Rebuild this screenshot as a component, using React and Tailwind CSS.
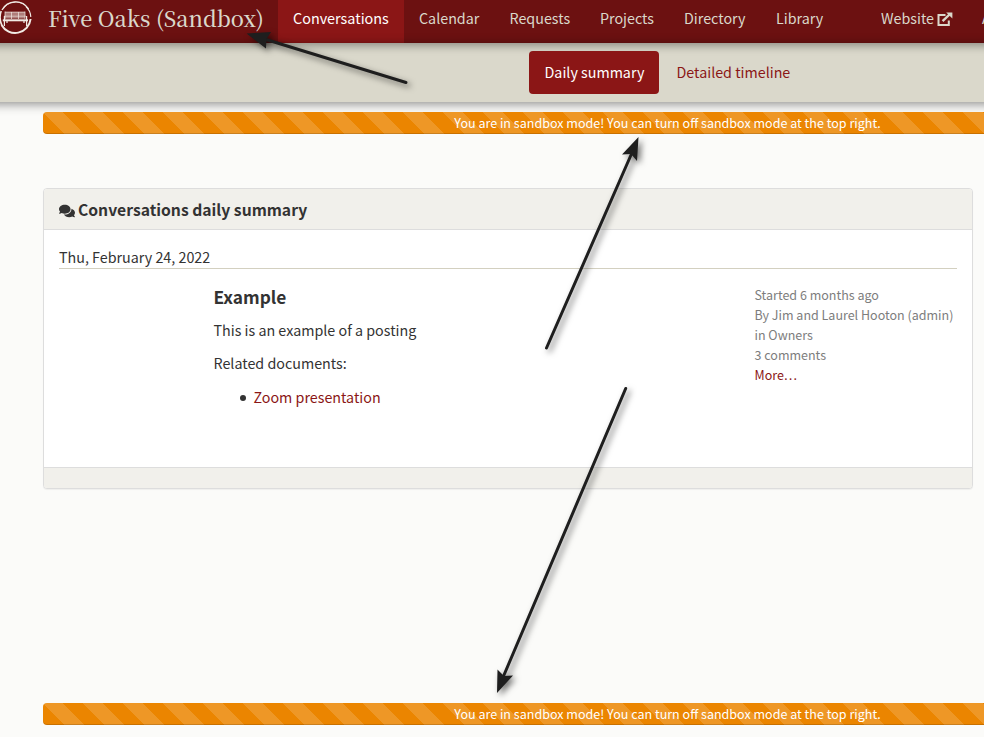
import { FaComments } from "react-icons/fa";

const navItems = [
  { label: "Calendar", width: "w-[90.5px]" },
  { label: "Requests", width: "w-[90.5px]" },
  { label: "Projects", width: "w-[84px]" },
  { label: "Directory", width: "w-[92px]" },
  { label: "Library", width: "w-[77px]" },
];

function Logo() {
  return (
    <svg width="33" height="36" viewBox="0 0 33 36" className="shrink-0" fill="none" stroke="#f1eae4">
      <path d="M2 10A15.4 15.4 0 0 1 28.5 9" strokeWidth="1.4" />
      <path d="M3.2 9A15 15 0 0 1 25 5" strokeWidth="1" opacity=".6" />
      <path d="M26 6.5Q30.6 11 30.8 17" strokeWidth="1.1" />
      <path d="M30.6 19A15.6 15.6 0 0 1 1.5 25" strokeWidth="2" />
      <path d="M1.8 25Q-1.4 18 1.2 11" strokeWidth="1.6" />
      <path d="M5 11.8H25V18.6H5Z" fill="#f1eae4" fillOpacity=".5" stroke="none" />
      <path d="M5 12.2H25M4 16.2H26" strokeWidth="1" opacity=".6" />
      <path d="M5 11.5V19M11.5 12V19M18.5 12V19M25 11.5V19" strokeWidth="1" opacity=".7" />
      <path d="M2.8 20.3H28" strokeWidth="2" />
      <path d="M4.4 16V26M26.6 16V26M7 21V23M24 21V23" strokeWidth="1.2" />
    </svg>
  );
}

function ExternalIcon() {
  return (
    <svg width="16" height="15" viewBox="0 0 16 15" fill="none" stroke="#dad8cb">
      <path d="M8.5 3H1.5V13H11.8V8.5" strokeWidth="2" />
      <path d="M5.6 9.2L12.5 2.5" strokeWidth="2.4" />
      <path d="M9.2 .4H15.4V6.4Z" fill="#dad8cb" stroke="none" />
    </svg>
  );
}

function SandboxBar() {
  return (
    <div className="ml-[43px] flex h-[22px] w-[1249px] shrink-0 justify-center rounded bg-[#eb8500] bg-[linear-gradient(45deg,rgba(255,255,255,.15)_25%,transparent_25%,transparent_50%,rgba(255,255,255,.15)_50%,rgba(255,255,255,.15)_75%,transparent_75%,transparent)] bg-[length:40px_40px] text-[12.54px] leading-[22px] text-white shadow-[inset_0_-1px_0_rgba(0,0,0,.15)]">
      <span className="whitespace-nowrap">You are in sandbox mode! You can turn off sandbox mode at the top right.</span>
    </div>
  );
}

function Arrow({ tail, neck, head }) {
  return (
    <g>
      <line x1={tail[0]} y1={tail[1]} x2={neck[0]} y2={neck[1]} stroke="#1e1e1e" strokeWidth="3" strokeLinecap="round" />
      <polygon points={head} fill="#1e1e1e" />
    </g>
  );
}

export default function App() {
  return (
    <div className="relative flex h-[737px] w-[984px] flex-col overflow-hidden bg-[#fbfbf9] font-['Noto_Sans_CJK_SC',sans-serif] text-[14.3px] text-[#333]">
      <header className="flex h-[43px] shrink-0 bg-[#6c1111] leading-[36px] whitespace-nowrap text-[#dad8cb]">
        <div className="flex w-[278px] shrink-0">
          <Logo />
          <span className="ml-[15px] font-['Noto_Serif_CJK_SC','Source_Serif_Pro','Liberation_Serif',serif] text-[21.7px] font-medium">Five Oaks (Sandbox)</span>
        </div>
        <a className="w-[126px] shrink-0 bg-[#8b1616] pl-[15px] text-[14.4px] text-white">Conversations</a>
        {navItems.map((item) => (
          <a key={item.label} className={`${item.width} shrink-0 pl-[15px]`}>{item.label}</a>
        ))}
        <a className="ml-7 flex w-[101px] shrink-0 items-start pl-[15px]">
          <span className="w-[56px]">Website</span>
          <span className="mt-3"><ExternalIcon /></span>
        </a>
        <a className="shrink-0 pl-[15px]">A</a>
      </header>

      <nav className="-mx-5 flex h-[59px] shrink-0 bg-[#dad8cb] pt-2 pl-[549px] leading-[41px] shadow-[inset_0_8px_8px_-5px_rgba(0,0,0,.35),0_2px_10px_rgba(0,0,0,.45)]">
        <a className="h-[43px] w-[130px] rounded bg-[#8b1616] pl-[15.5px] text-white">Daily summary</a>
        <a className="pl-[17.5px] text-[#8b1616]">Detailed timeline</a>
      </nav>

      <div className="mt-[10px]"><SandboxBar /></div>

      <section className="mt-[54px] ml-[43px] h-[301px] w-[930px] shrink-0 rounded border border-[#dddddd] bg-white shadow-[0_1px_1px_rgba(0,0,0,.05)]">
        <div className="flex h-[41px] items-center rounded-t-[3px] border-b border-[#dddddd] bg-[#f1f0eb] pl-[14.5px]">
          <FaComments className="mt-[3px] mr-[3.5px] size-[16px]" />
          <h3 className="mt-[2px] text-[15.7px] font-bold">Conversations daily summary</h3>
        </div>
        <div className="flex h-[237px] flex-col px-[15px] pt-[17px]">
          <div className="h-[22px] border-b border-[#d3d0c0] leading-[20px]">Thu, February 24, 2022</div>
          <div className="flex">
            <div className="w-[541px] pl-[154.5px]">
              <h4 className="mt-[16px] h-[24px] text-[17.3px] leading-[24px] font-bold">Example</h4>
              <p className="mt-[9px] leading-[23px]">This is an example of a posting</p>
              <p className="mt-[10px] leading-[23px]">Related documents:</p>
              <div className="mt-[11px] flex items-center leading-[23px]">
                <span className="mt-[2px] mr-2 ml-[26px] size-[6px] rounded-full bg-[#333]" />
                <a className="text-[#8b1616]">Zoom presentation</a>
              </div>
            </div>
            <div className="ml-[154.5px] pt-[16px] text-[12.5px] leading-5 whitespace-nowrap text-[#7d7d7d]">
              <div>Started 6 months ago</div>
              <div>By Jim and Laurel Hooton (admin)</div>
              <div>in Owners</div>
              <div>3 comments</div>
              <a className="block text-[#8b1616]">More…</a>
            </div>
          </div>
        </div>
        <div className="h-[21px] rounded-b-[3px] border-t border-[#dddddd] bg-[#f1f0eb]" />
      </section>

      <div className="mt-[214px]"><SandboxBar /></div>

      <svg width="984" height="737" className="pointer-events-none absolute inset-0 drop-shadow-[3px_3px_3px_rgba(0,0,0,.55)]">
        <Arrow tail={[406, 82.5]} neck={[266, 39.5]} head="246.5,33.5 271,32 266.5,39 266,48.5" />
        <Arrow tail={[546.5, 348]} neck={[631, 155]} head="638.5,137 622,154.5 631,154 637,161" />
        <Arrow tail={[625.7, 388.5]} neck={[504, 675]} head="497,693 497.5,669.5 504,676 513,675.5" />
      </svg>
    </div>
  );
}
